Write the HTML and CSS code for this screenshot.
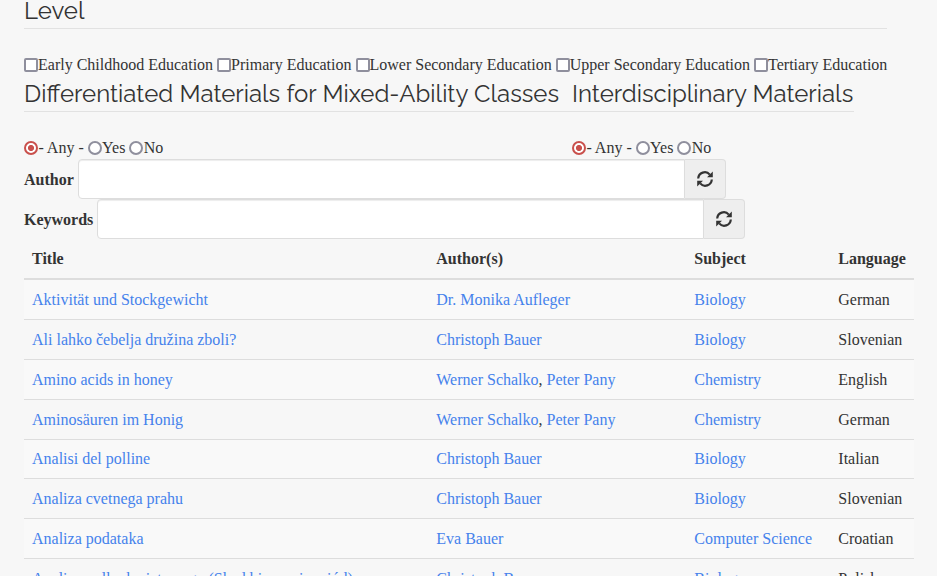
FILE: index.html
```html
<!DOCTYPE html>
<html lang="en"><head><meta charset="utf-8"><title>Teaching materials</title><link rel="stylesheet" href="styles.css"></head>
<body>
<main>
<form>
<fieldset class="level"><legend>Level</legend>
<div class="options"><label><input type="checkbox">Early Childhood Education</label> <label><input type="checkbox">Primary Education</label> <label><input type="checkbox">Lower Secondary Education</label> <label><input type="checkbox">Upper Secondary Education</label> <label><input type="checkbox">Tertiary Education</label></div></fieldset>
<div class="pair">
<fieldset class="diff"><legend>Differentiated Materials for Mixed-Ability Classes</legend>
<div class="options"><label><input type="radio" name="d" checked>- Any -</label> <label><input type="radio" name="d">Yes</label> <label><input type="radio" name="d">No</label></div></fieldset>
<fieldset class="inter"><legend>Interdisciplinary Materials</legend>
<div class="options"><label><input type="radio" name="i" checked>- Any -</label> <label><input type="radio" name="i">Yes</label> <label><input type="radio" name="i">No</label></div></fieldset>
</div>
<div class="field"><label for="author">Author</label><input type="text" id="author"><span class="addon"><svg viewBox="0 0 16 16"><path d="M1.2 7.500A6.600 6.600 0 0 1 12.800 3.600M14.800 8.500A6.600 6.600 0 0 1 3.200 12.400"/><path class="head" d="M15.800 .5V6.200H10zM.2 15.500V9.800H6z"/></svg></span></div>
<div class="field"><label for="keywords">Keywords</label><input type="text" id="keywords"><span class="addon"><svg viewBox="0 0 16 16"><path d="M1.2 7.500A6.600 6.600 0 0 1 12.800 3.600M14.800 8.500A6.600 6.600 0 0 1 3.200 12.400"/><path class="head" d="M15.800 .5V6.200H10zM.2 15.500V9.800H6z"/></svg></span></div>
</form>
<table>
<colgroup><col class="c1"><col class="c2"><col class="c3"><col class="c4"></colgroup>
<thead><tr><th>Title</th><th>Author(s)</th><th>Subject</th><th>Language</th></tr></thead>
<tbody>
<tr><td><a href="#">Aktivität und Stockgewicht</a></td><td><a href="#">Dr. Monika Aufleger</a></td><td><a href="#">Biology</a></td><td>German</td></tr>
<tr><td><a href="#">Ali lahko čebelja družina zboli?</a></td><td><a href="#">Christoph Bauer</a></td><td><a href="#">Biology</a></td><td>Slovenian</td></tr>
<tr><td><a href="#">Amino acids in honey</a></td><td><a href="#">Werner Schalko</a>, <a href="#">Peter Pany</a></td><td><a href="#">Chemistry</a></td><td>English</td></tr>
<tr><td><a href="#">Aminosäuren im Honig</a></td><td><a href="#">Werner Schalko</a>, <a href="#">Peter Pany</a></td><td><a href="#">Chemistry</a></td><td>German</td></tr>
<tr class="tight"><td><a href="#">Analisi del polline</a></td><td><a href="#">Christoph Bauer</a></td><td><a href="#">Biology</a></td><td>Italian</td></tr>
<tr><td><a href="#">Analiza cvetnega prahu</a></td><td><a href="#">Christoph Bauer</a></td><td><a href="#">Biology</a></td><td>Slovenian</td></tr>
<tr><td><a href="#">Analiza podataka</a></td><td><a href="#">Eva Bauer</a></td><td><a href="#">Computer Science</a></td><td>Croatian</td></tr>
<tr><td><a href="#">Analiza pyłku kwiatowego (Skąd bierze się miód)</a></td><td><a href="#">Christoph Bauer</a></td><td><a href="#">Biology</a></td><td>Polish</td></tr>
</tbody></table>
</main>
</body></html>
```
FILE: styles.css
```css
* { box-sizing: border-box; }
html { overflow: hidden; }
body { margin: 0; background: #f7f7f7; color: #333; font: 16px/22px "Liberation Serif", serif; height: 576px; overflow: hidden; }
main { padding: 0 23px 0 24px; }
form { margin: 0; }
fieldset { border: 0; margin: 0; padding: 0; min-width: 0; }
legend { display: block; width: 100%; padding: 0; margin-bottom: 25px; border-bottom: 1px solid #e2e2e2; font: 24px/34px Raleway, "Open Sans", sans-serif; white-space: nowrap; }
.level { width: 863px; margin-top: -6px; }
.options { height: 23px; white-space: nowrap; }
.pair { display: flex; }
.pair .options { height: 22px; }
.diff { width: 548px; }
.diff legend { word-spacing: .2px; }
.inter { width: 282px; }
input[type="checkbox"], input[type="radio"] { appearance: none; width: 14px; height: 14px; margin: 0; border: 2px solid #8f8f9d; background: #fff; vertical-align: -2px; }
input[type="checkbox"] { border-radius: 2px; }
input[type="radio"] { border-radius: 50%; margin-right: .4px; }
input[type="radio"]:checked { border-color: #c9504c; background: radial-gradient(#c9504c 0 2.7px, #fff 3.400px); }
.field { display: flex; align-items: center; height: 40px; }
.field label { font-weight: bold; margin-right: 4px; padding-top: 2px; }
.field input { width: 607px; height: 40px; border: 1px solid #ddd; border-radius: 4px 0 0 4px; background: #fff; box-shadow: inset 0 1px 1px rgba(0, 0, 0, .075); }
.addon { display: flex; align-items: center; justify-content: center; width: 41px; height: 40px; border: 1px solid #ddd; border-left: 0; border-radius: 0 4px 4px 0; background: #eee; }
svg { width: 16px; height: 16px; fill: none; stroke: #333; stroke-width: 2.2; }
.head { fill: #333; stroke: none; }
table { width: 890px; table-layout: fixed; border-collapse: separate; border-spacing: 0; }
.c1 { width: 404px; }
.c2 { width: 258px; }
.c3 { width: 144px; }
.c4 { width: 84px; }
th, td { text-align: left; white-space: nowrap; padding: 9px 7.700px 8px 8.300px; }
th:first-child, td:first-child { padding-left: 8px; }
th { border-bottom: 2px solid #ddd; }
td { border-bottom: 1px solid #ddd; }
.tight td { padding-top: 8px; }
tbody tr:nth-child(odd) { background: #f9f9f9; }
a { color: #4582ec; text-decoration: none; }
```
